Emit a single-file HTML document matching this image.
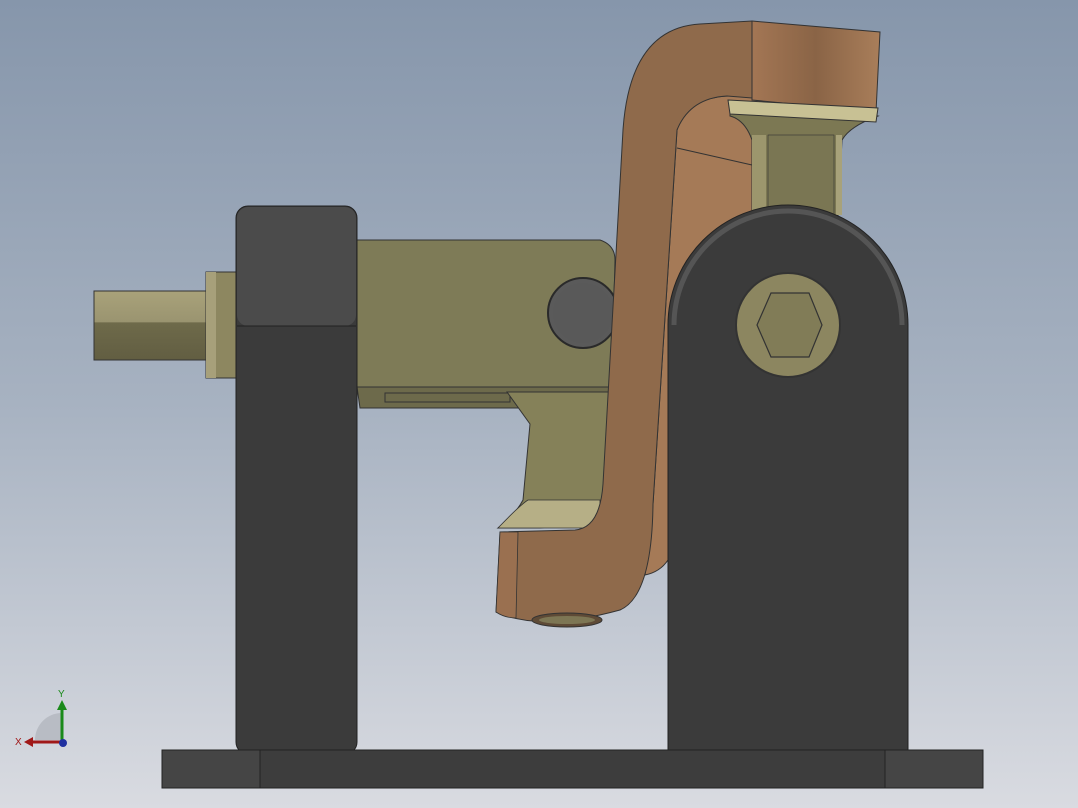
<!DOCTYPE html>
<html><head><meta charset="utf-8"><style>
html,body{margin:0;padding:0;width:1078px;height:808px;overflow:hidden}
svg{display:block}
</style></head><body>
<svg width="1078" height="808" viewBox="0 0 1078 808" xmlns="http://www.w3.org/2000/svg">
<defs>
<linearGradient id="bg" x1="0" y1="0" x2="0" y2="1">
<stop offset="0" stop-color="#8696ab"/><stop offset="0.5" stop-color="#a7b2c1"/><stop offset="1" stop-color="#d9dbe1"/>
</linearGradient>
<linearGradient id="cyl" x1="0" y1="0" x2="1" y2="0">
<stop offset="0" stop-color="#a37654"/><stop offset="0.5" stop-color="#8a6446"/><stop offset="1" stop-color="#a97e5a"/>
</linearGradient>
<linearGradient id="hex" x1="0" y1="0" x2="0" y2="1">
<stop offset="0" stop-color="#a9a27a"/><stop offset="0.45" stop-color="#9a9470"/><stop offset="0.46" stop-color="#6e6a4a"/><stop offset="1" stop-color="#625e42"/>
</linearGradient>
</defs>
<rect width="1078" height="808" fill="url(#bg)"/>

<rect x="94" y="291" width="114" height="69" fill="url(#hex)" stroke="#333" stroke-width="1"/>
<rect x="206" y="272" width="32" height="106" fill="#8d8760" stroke="#333"/>
<rect x="206" y="272" width="10" height="106" fill="#a7a07a"/>

<path d="M677 130 Q688 98 727 96 L760 96 L760 560 L668 560 Q660 572 645 575 L653 504 Z" fill="#a57a57" stroke="#333"/>
<line x1="677" y1="148" x2="752" y2="165" stroke="#333"/>

<path d="M357 240 L600 240 Q615 245 615 260 L612 387 L357 387 Z" fill="#7e7b57" stroke="#333"/>
<path d="M357 387 L612 387 L610 408 L360 408 Z" fill="#6d6a4b" stroke="#333"/>
<rect x="385" y="393" width="125" height="9" fill="none" stroke="#333"/>
<path d="M507 392 L612 392 L608 520 L540 528 L498 528 Q515 515 523 500 L530 424 Z" fill="#858159" stroke="#333"/>
<path d="M498 528 Q520 505 528 500 L600 500 L600 528 Z" fill="#b6af86" stroke="#333" stroke-width="0.8"/>
<circle cx="583" cy="313" r="35" fill="#5a5a5a" stroke="#2a2a2a" stroke-width="2"/>
<circle cx="583" cy="313" r="30" fill="#595959"/>

<rect x="236" y="206" width="121" height="548" rx="12" fill="#3b3b3b" stroke="#222"/>
<rect x="237" y="207" width="119" height="119" rx="11" fill="#4b4b4b"/>
<line x1="237" y1="326" x2="356" y2="326" stroke="#222"/>

<path d="M603 484 Q600 528 575 530 L500 532 L496 612 Q540 632 620 610 Q652 596 653 504 L677 130 Q690 98 727 96 L752 98 L752 21 L700 24 Q630 28 623 130 Z" fill="#8f6a4b" stroke="#333"/>
<path d="M500 532 L496 612 Q505 618 516 618 L518 532 Z" fill="#9a7050" stroke="#333" stroke-width="0.8"/>
<path d="M752 21 L880 32 L876 112 L752 100 Z" fill="url(#cyl)" stroke="#333"/>
<ellipse cx="567" cy="620" rx="35" ry="7" fill="#5e4a36" stroke="#333"/>
<ellipse cx="567" cy="620" rx="28" ry="4" fill="#7d7654"/>

<path d="M730 110 Q800 98 878 116 Q850 126 842 140 L838 215 L752 215 L752 140 Q745 120 730 116 Z" fill="#7c7853" stroke="#333"/>
<path d="M728 100 L878 108 L876 122 L730 114 Z" fill="#c8c194" stroke="#333"/>
<rect x="768" y="135" width="66" height="80" fill="#7a7653" stroke="#333" stroke-width="0.6"/>
<rect x="752" y="135" width="14" height="80" fill="#9c966d"/>
<rect x="836" y="135" width="6" height="80" fill="#a8a27a"/>

<path d="M668 325 A120 120 0 0 1 908 325 L908 754 L668 754 Z" fill="#3b3b3b" stroke="#222"/>
<path d="M674 325 A114 114 0 0 1 902 325" fill="none" stroke="#555" stroke-width="5"/>
<circle cx="788" cy="325" r="52" fill="#8c8660" stroke="#333" stroke-width="2"/>
<polygon points="771,293 809,293 822,325 809,357 771,357 757,325" fill="#817c57" stroke="#333" stroke-width="1.2"/>

<rect x="162" y="750" width="821" height="38" rx="3" fill="#3d3d3d" stroke="#222"/>
<rect x="162" y="750" width="98" height="38" fill="#454545" stroke="#222"/>
<rect x="885" y="750" width="98" height="38" fill="#454545" stroke="#222"/>

<path d="M35 740 A27 27 0 0 1 62 713 L62 740 Z" fill="#b8bcc4"/>
<line x1="62" y1="742" x2="62" y2="708" stroke="#1a8a1a" stroke-width="3"/>
<polygon points="57,710 67,710 62,700" fill="#1a8a1a"/>
<line x1="62" y1="742" x2="32" y2="742" stroke="#a01818" stroke-width="3"/>
<polygon points="33,737 33,747 24,742" fill="#a01818"/>
<circle cx="63" cy="743" r="4" fill="#2030a0"/>
<text x="58" y="697" font-family="Liberation Sans, sans-serif" font-size="10" fill="#1a8a1a">Y</text>
<text x="15" y="745" font-family="Liberation Sans, sans-serif" font-size="10" fill="#a01818">X</text>
</svg>
</body></html>
